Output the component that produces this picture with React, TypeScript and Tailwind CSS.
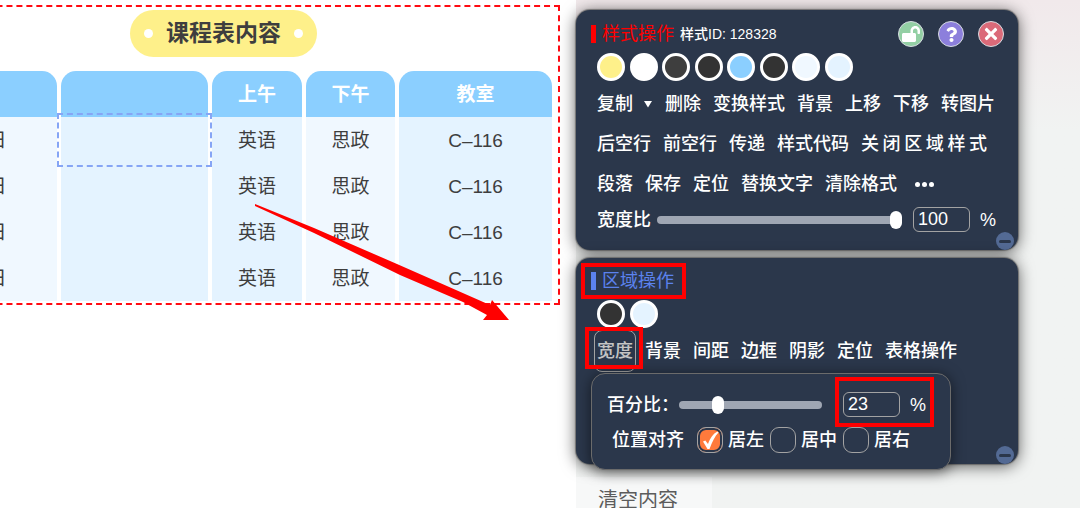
import React from 'react';
import { FaLockOpen, FaQuestion, FaTimes } from 'react-icons/fa';

const rows = ['星期日', '星期日', '星期日', '星期日'];

const rangeClass =
  'block h-[18px] appearance-none bg-transparent [&::-webkit-slider-runnable-track]:h-2 [&::-webkit-slider-runnable-track]:rounded-full [&::-webkit-slider-runnable-track]:bg-[#9fa6b3] [&::-webkit-slider-thumb]:-mt-[5px] [&::-webkit-slider-thumb]:h-[18px] [&::-webkit-slider-thumb]:w-3 [&::-webkit-slider-thumb]:appearance-none [&::-webkit-slider-thumb]:rounded-full [&::-webkit-slider-thumb]:bg-white';

const numberClass =
  'block h-[25px] w-[57px] rounded-md border border-[#a3a3a3] bg-transparent px-1 text-lg leading-none text-white';

const panelClass =
  'relative rounded-[14px] bg-[#2b374b] text-lg font-medium text-white shadow-[0_0_1px_1px_rgba(90,90,90,0.7),0_2px_16px_rgba(0,0,0,0.65)]';

function Lesson({ children }: { children: React.ReactNode }) {
  return <td className="bg-[#e4f3ff] pt-0.5">{children}</td>;
}

function Timetable() {
  return (
    <div className="w-[673px] shrink-0 self-start border-2 border-dashed border-[#ff0a12] px-0.5 pt-[3px] pb-0.5">
      <h1 className="mx-auto flex h-[47px] w-[187px] items-center justify-between rounded-full bg-[#fef08a] px-3.5 text-[23px] font-bold text-[#3e3e3e]">
        <span className="size-[9px] rounded-full bg-white" />
        课程表内容
        <span className="size-[9px] rounded-full bg-white" />
      </h1>
      <table className="mt-3.5 w-full table-fixed border-separate border-spacing-x-1 border-spacing-y-0 text-center text-[19px] text-[#3e3e3e]">
        <colgroup>
          <col className="w-[162px]" />
          <col className="w-[147px]" />
          <col className="w-[90px]" />
          <col className="w-[89px]" />
          <col className="w-[153px]" />
        </colgroup>
        <thead>
          <tr className="h-[46px] text-white">
            <th className="rounded-t-[15px] bg-[#8bcfff]" />
            <th className="rounded-t-[15px] bg-[#8bcfff]" />
            <th className="rounded-t-[15px] bg-[#8bcfff] pt-0.5">上午</th>
            <th className="rounded-t-[15px] bg-[#8bcfff] pt-0.5">下午</th>
            <th className="rounded-t-[15px] bg-[#8bcfff] pt-0.5">教室</th>
          </tr>
        </thead>
        <tbody>
          {rows.map((day, i) => (
            <tr key={i} className="h-[46px]">
              <td className="bg-[#f0f8ff] pt-0.5 pl-1">{day}</td>
              <td className="relative bg-[#e4f3ff]">
                {i === 0 && (
                  <span className="absolute -inset-1 z-10 border-2 border-dashed border-[#86a5f5]" />
                )}
              </td>
              <Lesson>英语</Lesson>
              <td className="bg-[#f0f8ff] pt-0.5">思政</td>
              <Lesson>C–116</Lesson>
            </tr>
          ))}
        </tbody>
      </table>
    </div>
  );
}

function Swatches({ colors }: { colors: string[] }) {
  return (
    <div className="mt-1.5 ml-[21px] grid w-[260px] grid-cols-8">
      {colors.map((c, i) => (
        <button
          key={i}
          type="button"
          aria-label={c}
          className="size-7 rounded-full border-[3px] border-white"
          style={{ backgroundColor: c }}
        />
      ))}
    </div>
  );
}

function Actions({ items }: { items: string[] }) {
  return (
    <>
      {items.map((t) => (
        <button key={t} type="button">
          {t}
        </button>
      ))}
    </>
  );
}

function Collapse() {
  return (
    <button
      type="button"
      aria-label="收起"
      className="absolute right-1 bottom-0 flex size-[18px] items-center justify-center rounded-full bg-[#536a94]"
    >
      <span className="h-[3px] w-3 rounded-full bg-[#2b374b]" />
    </button>
  );
}

function Align({ label, checked = false }: { label: string; checked?: boolean }) {
  return (
    <label className="flex items-center gap-[5px]">
      <span className="relative block size-[26px]">
        <input
          type="radio"
          name="align"
          defaultChecked={checked}
          className="peer block size-[26px] appearance-none rounded-[9px] border border-[#a3a3a3] checked:bg-[#ff7a3c] checked:shadow-[inset_0_0_0_2px_#2b374b]"
        />
        <svg viewBox="0 0 26 26" className="pointer-events-none absolute inset-0 hidden peer-checked:block">
          <path d="M6 14.5 L8.3 13.6 L11 17 C13 11.5 16 6.5 20.5 4.5 L21.5 5.5 C18 9 15 15 12.5 22 L10.5 22 Z" fill="#fff" />
        </svg>
      </span>
      {label}
    </label>
  );
}

function StylePanel() {
  return (
    <section className={`${panelClass} pt-[11px] pb-[18px]`}>
      <header className="flex h-[26px] items-center pr-3.5 pl-[15px]">
        <span className="h-[18px] w-[5px] bg-[#ff0000]" />
        <h2 className="ml-1.5 text-lg font-normal text-[#ff0000]">样式操作</h2>
        <span className="ml-1.5 text-sm">样式ID: 128328</span>
        <div className="ml-auto flex gap-3.5">
          <button type="button" aria-label="解锁" className="flex size-[26px] items-center justify-center rounded-full border border-[#d8dde2] bg-[#93cfa4]">
            <FaLockOpen size={18} />
          </button>
          <button type="button" aria-label="帮助" className="flex size-[26px] items-center justify-center rounded-full border border-[#d8dde2] bg-[#8c7fdc]">
            <FaQuestion size={15} />
          </button>
          <button type="button" aria-label="关闭" className="flex size-[26px] items-center justify-center rounded-full border border-[#d8dde2] bg-[#db6a79]">
            <FaTimes size={18} />
          </button>
        </div>
      </header>
      <Swatches colors={['#fef08a', '#ffffff', '#3e3e3e', '#333333', '#8bcfff', '#333333', '#f0f8ff', '#e4f3ff']} />
      <div className="mt-[3px] ml-[21px] flex h-10 items-center gap-3 whitespace-nowrap">
        <button type="button" className="flex items-center gap-2.5">
          复制
          <svg viewBox="0 0 10 8" className="h-2 w-2.5">
            <path d="M1 1 H9 L5 7.5 Z" fill="#fff" />
          </svg>
        </button>
        <Actions items={['删除', '变换样式', '背景', '上移', '下移', '转图片']} />
      </div>
      <div className="ml-[21px] flex h-10 items-center gap-3 whitespace-nowrap">
        <Actions items={['后空行', '前空行', '传递', '样式代码']} />
        <button type="button" className="w-[126px] [text-align-last:justify]">
          关闭区域样式
        </button>
      </div>
      <div className="ml-[21px] flex h-10 items-center gap-3 whitespace-nowrap">
        <Actions items={['段落', '保存', '定位', '替换文字', '清除格式']} />
        <button type="button" aria-label="更多" className="ml-1.5 flex gap-[2px]">
          <span className="size-[5px] rounded-full bg-white" />
          <span className="size-[5px] rounded-full bg-white" />
          <span className="size-[5px] rounded-full bg-white" />
        </button>
      </div>
      <div className="mt-[3px] flex h-[25px] items-center pr-[22px] pl-[21px]">
        <label htmlFor="ratio">宽度比</label>
        <input id="ratio" type="range" defaultValue={100} className={`${rangeClass} ml-1.5 min-w-0 flex-1`} />
        <input aria-label="宽度比数值" defaultValue="100" className={`${numberClass} ml-[11px]`} />
        <span className="ml-2.5">%</span>
      </div>
      <Collapse />
    </section>
  );
}

function AreaPanel() {
  return (
    <section className={`${panelClass} pt-2.5`}>
      <header className="flex h-[26px] items-center pl-[15px]">
        <div className="relative flex items-center">
          <span className="h-[18px] w-[5px] bg-[#5b82ee]" />
          <h2 className="ml-1.5 text-lg font-normal text-[#5b82ee]">区域操作</h2>
          <span className="absolute -inset-y-1 -right-3 -left-2.5 border-4 border-[#ff0000]" />
        </div>
      </header>
      <Swatches colors={['#333333', '#e4f3ff']} />
      <div className="mt-[3px] ml-[18px] flex h-10 items-center gap-3 whitespace-nowrap">
        <button
          type="button"
          className="relative -mr-[3px] h-[42px] w-[42px] rounded-lg border border-[#a3a3a3] text-[#c4c4c4]"
        >
          宽度
          <span className="absolute -top-1 -right-2 bottom-0.5 -left-2.5 z-20 border-4 border-[#ff0000]" />
        </button>
        <Actions items={['背景', '间距', '边框', '阴影', '定位', '表格操作']} />
      </div>
      <div className="relative z-10 mt-0.5 -mb-1.5 ml-[15px] w-[360px] rounded-[14px] border border-[#6b6b6b] bg-[#2b374b] pt-[18px] pb-4 shadow-[0_2px_14px_rgba(0,0,0,0.55)]">
        <div className="flex h-[25px] items-center pl-[15px]">
          <label htmlFor="percent">百分比：</label>
          <input id="percent" type="range" defaultValue={25} className={`${rangeClass} w-[143px]`} />
          <div className="relative ml-[21px] flex items-center gap-2.5">
            <input aria-label="百分比数值" defaultValue="23" className={numberClass} />
            <span>%</span>
            <span className="pointer-events-none absolute -top-3.5 -right-2 -bottom-2 -left-2 border-4 border-[#ff0000]" />
          </div>
        </div>
        <div className="mt-2.5 flex h-[26px] items-center gap-1.5 pl-5">
          <span className="mr-[7px]">位置对齐</span>
          <Align label="居左" checked />
          <Align label="居中" />
          <Align label="居右" />
        </div>
      </div>
      <Collapse />
    </section>
  );
}

export default function App() {
  return (
    <main className="relative grid h-screen grid-cols-[8fr_7fr] overflow-hidden bg-white font-['Liberation_Sans','Noto_Sans_CJK_SC',sans-serif]">
      <section className="flex min-w-0 justify-end overflow-hidden pt-[5px] pr-4">
        <Timetable />
      </section>
      <aside className="bg-linear-to-b from-[#f1e9eb] to-[#f1f3f2] to-25%">
        <div className="flex flex-col gap-2 pt-2.5 pr-[62px]">
          <StylePanel />
          <AreaPanel />
        </div>
        <nav className="mt-[13px] w-[136px] bg-[#f7f8f8]">
          <a href="#clear" className="block pl-[22px] text-xl leading-[46px] text-[#5c5c5c]">
            清空内容
          </a>
        </nav>
      </aside>
      <svg viewBox="0 0 256 120" className="pointer-events-none absolute top-[202px] left-[254px] h-[120px] w-64">
        <polygon points="1,2 60,26 143,62 236,103 238,98 255,118 229,118 233,113 209,100 146,73 60,31 1,4" fill="#ff0000" />
      </svg>
    </main>
  );
}
